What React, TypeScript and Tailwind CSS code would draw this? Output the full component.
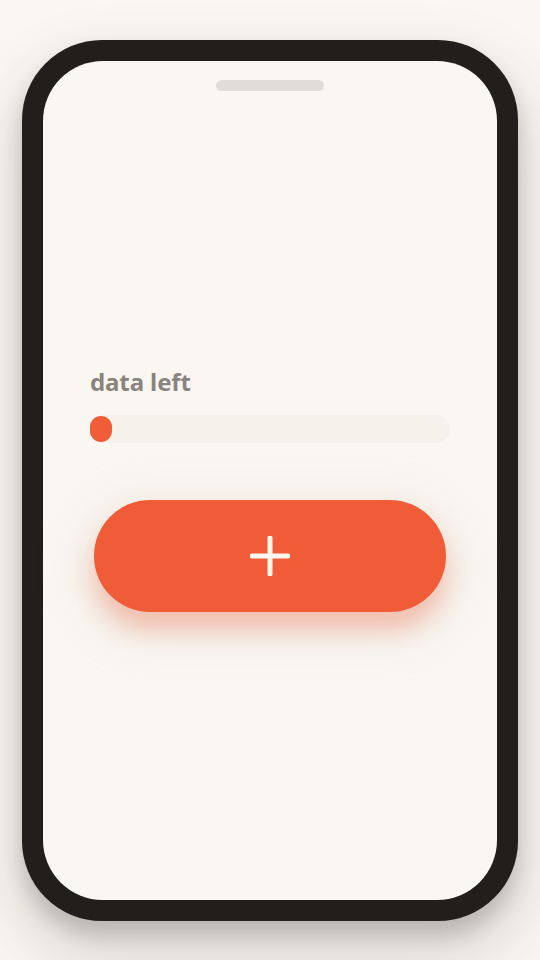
export default function App() {
  const used = 6

  return (
    <main className="min-h-screen w-full bg-[#faf7f2] flex items-center justify-center font-['Noto_Sans',sans-serif]">
      <div className="w-[496px] h-[881px] rounded-[80px] bg-[#221e1b] p-[21px] shadow-[0_14px_20px_rgba(40,34,28,0.2),0_30px_60px_12px_rgba(40,34,28,0.14)]">
        <div className="w-full h-full rounded-[60px] bg-[#faf7f3] flex flex-col items-center">
          <div className="mt-[19px] w-[108px] h-[11px] rounded-full bg-[#e0ddd8]" />

          <div className="w-full px-[47px] mt-[275px]">
            <p className="text-[24px] leading-[32px] font-bold text-[#8a837e] tracking-[-0.1px]">data left</p>
            <div className="mt-[17px] h-[28px] w-full rounded-full bg-[#f5f1eb] flex items-center">
              <div
                className="h-[26px] rounded-full bg-[#f05d38]"
                style={{ width: `${used}%` }}
              />
            </div>
          </div>

          <button className="mt-[57px] w-[352px] h-[112px] rounded-full bg-[#ef5c37] flex items-center justify-center shadow-[0_18px_22px_rgba(239,92,55,0.3),0_12px_40px_24px_rgba(200,165,130,0.12)]">
            <svg width="40" height="40" viewBox="0 0 40 40" fill="none">
              <path d="M20 2v36M2 20h36" stroke="#fdf6ee" strokeWidth="5" strokeLinecap="round" />
            </svg>
          </button>
        </div>
      </div>
    </main>
  )
}
